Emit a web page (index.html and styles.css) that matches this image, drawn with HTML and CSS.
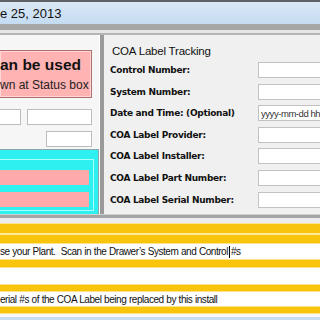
FILE: index.html
```html
<!DOCTYPE html>
<html>
<head>
<meta charset="utf-8">
<link rel="stylesheet" href="styles.css">
</head>
<body>
<div class="screen">
  <div class="titlebar"><span class="title">e 25, 2013</span></div>
  <div class="sep"></div>
  <div class="main">
    <div class="left">
      <div class="status">
        <div class="status-big">an be used</div>
        <div class="status-small">wn at Status box</div>
      </div>
      <div class="row-inputs">
        <div class="box box-a"></div>
        <div class="box box-b"></div>
      </div>
      <div class="row-inputs end">
        <div class="box box-c"></div>
      </div>
      <div class="cyan">
        <div class="cyan-inner">
          <div class="pinkbar"></div>
          <div class="pinkbar"></div>
        </div>
      </div>
    </div>
    <div class="divider"></div>
    <div class="right">
      <div class="heading">COA Label Tracking</div>
      <div class="form">
        <div class="label">Control Number:</div><div class="field"></div>
        <div class="label">System Number:</div><div class="field"></div>
        <div class="label">Date and Time: (Optional)</div><div class="field"><span class="ph">yyyy-mm-dd hh</span></div>
        <div class="label">COA Label Provider:</div><div class="field"></div>
        <div class="label">COA Label Installer:</div><div class="field"></div>
        <div class="label">COA Label Part Number:</div><div class="field"></div>
        <div class="label">COA Label Serial Number:</div><div class="field"></div>
      </div>
    </div>
  </div>
  <div class="sep2"></div>
  <div class="bottom">
    <div class="ybar thick"></div>
    <div class="line l1">se your Plant.&nbsp; Scan in the Drawer’s System and Control<span class="caret"></span>#s</div>
    <div class="ybar y1"></div>
    <div class="line l2"></div>
    <div class="ybar"></div>
    <div class="line l3">erial #s of the COA Label being replaced by this install</div>
    <div class="ybar"></div>
    <div class="foot"></div>
  </div>
</div>
</body>
</html>
```
FILE: styles.css
```css
html, body {
  margin: 0;
  padding: 0;
}
body {
  width: 320px;
  height: 320px;
  overflow: hidden;
  background: #f0f0f0;
  font-family: "DejaVu Sans", "Liberation Sans", sans-serif;
}
.screen {
  width: 320px;
  height: 320px;
  overflow: hidden;
  display: flex;
  flex-direction: column;
}
.titlebar {
  height: 22px;
  flex: none;
  border-top: 2px solid #5e6266;
  background: linear-gradient(#dbe9f7, #c4dbf1);
  display: flex;
  align-items: center;
}
.title {
  font-family: "Liberation Sans", sans-serif;
  font-size: 13px;
  color: #111;
}
.sep {
  height: 6px;
  flex: none;
  background: #a6a6a6;
  border-bottom: 3px solid #e6e6e6;
  box-shadow: 0 2px 0 #b5b5b5;
  margin-bottom: 2px;
}
.main {
  height: 179px;
  flex: none;
  display: flex;
}
.left {
  width: 99px;
  background: #f6f6f6;
  border-right: 1px solid #ffffff;
  display: flex;
  flex-direction: column;
  padding-top: 15px;
}
.status {
  width: 92px;
  height: 48px;
  box-sizing: border-box;
  background: #ffb3b3;
  border: 1px solid #b07070;
  border-left: none;
  box-shadow: inset 0 0 0 1px #ffd6d6;
  display: flex;
  flex-direction: column;
  justify-content: center;
  gap: 4px;
  white-space: nowrap;
  overflow: hidden;
}
.status-big {
  font-family: "Liberation Sans", sans-serif;
  font-weight: bold;
  font-size: 15.5px;
  color: #111;
  line-height: 18px;
}
.status-small {
  font-family: "Liberation Sans", sans-serif;
  font-size: 12px;
  color: #222;
  line-height: 15px;
}
.row-inputs {
  display: flex;
  gap: 6px;
  margin-top: 11px;
  width: 92px;
}
.row-inputs.end {
  justify-content: flex-end;
  margin-top: 6px;
}
.box {
  height: 16px;
  box-sizing: border-box;
  background: #fff;
  border: 1px solid #bdbdbd;
}
.box-a { width: 21px; border-left: none; }
.box-b { width: 65px; }
.box-c { width: 46px; }
.cyan {
  margin-top: 2px;
  flex: 1;
  background: #2ef0f0;
  border-top: 1px solid #8aaaaa;
  border-right: 1px solid #8aaaaa;
  padding: 9px 4px 3px 0;
  box-sizing: border-box;
  display: flex;
  flex-direction: column;
}
.cyan-inner {
  flex: 1;
  box-sizing: border-box;
  border: 1px solid #a8ffff;
  border-left: none;
  padding: 10px 4px 0 0;
  display: flex;
  flex-direction: column;
  gap: 7px;
}
.pinkbar {
  height: 15px;
  background: #ffaaaa;
}
.divider {
  width: 4px;
  background: #9a9a9a;
}
.right {
  flex: 1;
  background: #f0f0f0;
  padding-left: 6px;
  padding-top: 9px;
}
.heading {
  font-family: "Liberation Sans", sans-serif;
  font-size: 11.5px;
  letter-spacing: -0.2px;
  color: #111;
  line-height: 14px;
  margin-bottom: 4px;
  padding-left: 2px;
}
.form {
  display: grid;
  grid-template-columns: 148px 1fr;
  grid-auto-rows: 16px;
  row-gap: 5.6px;
  align-items: center;
}
.label {
  font-family: "DejaVu Sans", sans-serif;
  font-weight: bold;
  font-size: 9px;
  letter-spacing: -0.3px;
  color: #111;
  white-space: nowrap;
}
.field {
  height: 16px;
  box-sizing: border-box;
  background: #fff;
  border: 1px solid #c2c2c2;
  border-right: none;
  display: flex;
  align-items: center;
  overflow: hidden;
}
.ph {
  font-family: "Liberation Sans", sans-serif;
  font-size: 9.5px;
  letter-spacing: -0.45px;
  color: #333;
  padding-left: 2px;
  white-space: nowrap;
}
.sep2 {
  height: 3px;
  flex: none;
  background: #a4a4a4;
  border-bottom: 5px solid #ececec;
  border-top: 1px solid #d0d0d0;
}
.bottom {
  flex: 1;
  display: flex;
  flex-direction: column;
  background: #fff;
}
.ybar {
  height: 6px;
  flex: none;
  background: #f9c50c;
  border-top: 1px solid #fde28a;
  border-bottom: 1px solid #fde28a;
}
.ybar.y1 {
  height: 7px;
}
.ybar.thick {
  height: 19px;
  background: linear-gradient(#f9c50c 0 45%, #fde99a 45% 60%, #f9c50c 60% 100%);
}
.line {
  height: 15px;
  flex: none;
  display: flex;
  align-items: center;
  font-family: "Liberation Sans", sans-serif;
  font-size: 10px;
  letter-spacing: -0.45px;
  word-spacing: 0.3px;
  color: #111;
  white-space: nowrap;
}
.line.l2 { height: 16px; }
.line.l3 { height: 14px; }
.caret {
  display: inline-block;
  width: 1px;
  height: 12px;
  background: #000;
  margin: 0 1px;
}
.foot {
  flex: 1;
  border-top: 3px solid #f8f8f8;
  background: #c7ddf2;
}
```
